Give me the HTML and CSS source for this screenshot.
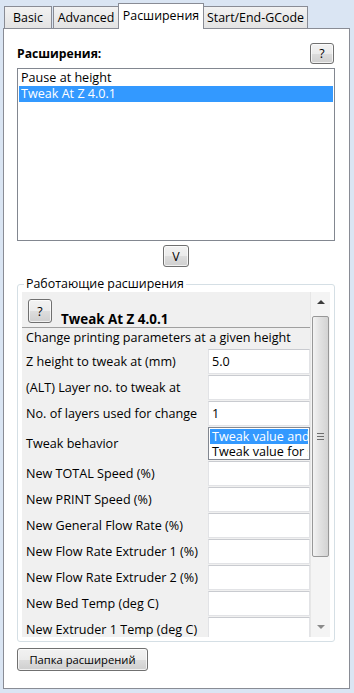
FILE: index.html
```html
<!DOCTYPE html>
<html lang="ru">
<head>
    <meta charset="UTF-8">
    <meta name="viewport" content="width=device-width, initial-scale=1.0">
    <title>Расширения</title>
    <link rel="stylesheet" href="styles.css">
</head>
<body>

<div class="tabs">
    <div class="tab tab-basic">Basic</div>
    <div class="tab tab-advanced">Advanced</div>
    <div class="tab tab-plugins active">Расширения</div>
    <div class="tab tab-gcode">Start/End-GCode</div>
</div>

<div class="pane">
    <div class="pane-head">
        <span class="pane-title">Расширения:</span>
        <button class="btn btn-help">?</button>
    </div>

    <ul class="plugin-list">
        <li>Pause at height</li>
        <li class="selected">Tweak At Z 4.0.1</li>
    </ul>

    <div class="move-row">
        <button class="btn btn-move">V</button>
    </div>

    <fieldset class="active-group">
        <legend>Работающие расширения</legend>
        <div class="scroll-box">
            <div class="scroll-content">
                <div class="plugin-head">
                    <button class="btn btn-help btn-plugin-help">?</button>
                    <span class="plugin-name">Tweak At Z 4.0.1</span>
                </div>
                <div class="plugin-desc">Change printing parameters at a given height</div>

                <div class="param">
                    <label>Z height to tweak at (mm)</label>
                    <input type="text" value="5.0">
                </div>
                <div class="param">
                    <label>(ALT) Layer no. to tweak at</label>
                    <input type="text">
                </div>
                <div class="param">
                    <label>No. of layers used for change</label>
                    <input type="text" value="1">
                </div>
                <div class="param param-list">
                    <label>Tweak behavior</label>
                    <ul class="choice-list">
                        <li class="selected">Tweak value and keep it for the rest</li>
                        <li>Tweak value for single layer only</li>
                    </ul>
                </div>
                <div class="param">
                    <label>New TOTAL Speed (%)</label>
                    <input type="text">
                </div>
                <div class="param">
                    <label>New PRINT Speed (%)</label>
                    <input type="text">
                </div>
                <div class="param">
                    <label>New General Flow Rate (%)</label>
                    <input type="text">
                </div>
                <div class="param">
                    <label>New Flow Rate Extruder 1 (%)</label>
                    <input type="text">
                </div>
                <div class="param">
                    <label>New Flow Rate Extruder 2 (%)</label>
                    <input type="text">
                </div>
                <div class="param">
                    <label>New Bed Temp (deg C)</label>
                    <input type="text">
                </div>
                <div class="param">
                    <label>New Extruder 1 Temp (deg C)</label>
                    <input type="text">
                </div>
                <div class="param">
                    <label>New Extruder 2 Temp (deg C)</label>
                    <input type="text">
                </div>
            </div>

            <div class="scrollbar">
                <div class="arrow arrow-up"></div>
                <div class="track">
                    <div class="thumb"><span class="grip"></span></div>
                </div>
                <div class="arrow arrow-down"></div>
            </div>
        </div>
    </fieldset>

    <button class="btn btn-folder">Папка расширений</button>
</div>

</body>
</html>
```

FILE: styles.css
```css
body {
    margin: 0;
    padding: 0;
    width: 354px;
    height: 693px;
    overflow: hidden;
    background-color: #dae5f3;
    font-family: "Open Sans", "Noto Sans", sans-serif;
    font-size: 12.6px;
    color: #000;
}

/* tabs */
.tabs {
    display: flex;
    align-items: flex-end;
    padding: 3px 0 0 4px;
    box-sizing: border-box;
    height: 28px;
}

.tab {
    height: 22px;
    line-height: 21px;
    text-align: center;
    box-sizing: border-box;
    border: 1px solid #898c95;
    border-bottom: none;
    background: linear-gradient(#f2f2f2, #e3e3e3);
    margin-right: 1px;
    font-size: 12.4px;
    white-space: nowrap;
}

.tab-basic { width: 48px; }
.tab-advanced { width: 66px; margin-right: 0; }
.tab-plugins { width: 86px; margin-right: 0; }
.tab-gcode { width: 104px; border-left: none; }

.tab.active {
    position: relative;
    z-index: 1;
    height: 26px;
    line-height: 24px;
    margin-bottom: -1px;
    background: #fff;
    margin-left: -1px;
}

/* main pane */
.pane {
    margin-left: 3px;
    width: 347px;
    height: 661px;
    box-sizing: border-box;
    border: 1px solid #898c95;
    background-color: #fff;
    padding: 0 14px 0 13px;
}

.pane-head {
    display: flex;
    align-items: center;
    justify-content: space-between;
    margin-top: 14px;
    height: 21px;
}

.pane-title {
    font-weight: bold;
    font-size: 12.2px;
}

.btn {
    font-family: inherit;
    font-size: 12.4px;
    color: #000;
    padding: 0;
    border: 1px solid #707070;
    border-radius: 3px;
    background: linear-gradient(#f2f2f2 0%, #ebebeb 50%, #dddddd 51%, #cfcfcf 100%);
    box-shadow: inset 0 0 0 1px rgba(255, 255, 255, 0.7);
    cursor: pointer;
}

.btn-help {
    width: 24px;
    height: 21px;
    margin-right: 1px;
}

.plugin-list {
    list-style-type: none;
    margin: 4px 0 0 0;
    padding: 1px;
    height: 173px;
    box-sizing: border-box;
    border: 1px solid #828790;
}

.plugin-list li {
    height: 16px;
    line-height: 16px;
    padding-left: 2px;
    white-space: nowrap;
}

.selected {
    background-color: #3399ff;
    color: #fff;
}

.move-row {
    display: flex;
    justify-content: center;
    margin-top: 4px;
}

.btn-move {
    width: 26px;
    height: 22px;
}

/* group of running plugins */
.active-group {
    margin: 9px 0 0 0;
    padding: 0 4px 4px 4px;
    border: 1px solid #d5dfe5;
    border-radius: 3px;
    min-width: 0;
}

.active-group legend {
    margin-left: 2px;
    padding: 0 2px;
    line-height: 16px;
    font-size: 12.4px;
}

.scroll-box {
    display: flex;
    height: 345px;
    background-color: #f0f0f0;
}

.scroll-content {
    width: 289px;
    overflow: hidden;
}

.plugin-head {
    display: flex;
    height: 35px;
    border-bottom: 1px solid #a0a0a0;
}

.btn-plugin-help {
    width: 24px;
    height: 24px;
    margin: 7px 0 0 6px;
}

.plugin-name {
    align-self: flex-end;
    margin-left: 9px;
    font-weight: bold;
    font-size: 13.4px;
    line-height: 16px;
}

.plugin-desc {
    height: 20px;
    line-height: 20px;
    padding-left: 4px;
    white-space: nowrap;
}

.param {
    display: flex;
    align-items: center;
    height: 26px;
    padding-left: 4px;
}

.param label {
    width: 182px;
    flex-shrink: 0;
    white-space: nowrap;
}

.param input {
    width: 102px;
    height: 25px;
    margin: 0;
    box-sizing: border-box;
    border: 1px solid #e2e3e6;
    border-top-color: #c9cbd0;
    padding: 0 0 0 3px;
    font-family: inherit;
    font-size: 12.6px;
    background-color: #fff;
    outline: none;
}

.param-list {
    height: 34px;
}

.choice-list {
    list-style-type: none;
    margin: 0;
    padding: 1px;
    width: 102px;
    height: 33px;
    box-sizing: border-box;
    border: 1px solid #828790;
    background-color: #fff;
    overflow: hidden;
}

.choice-list li {
    height: 15px;
    line-height: 15px;
    padding-left: 2px;
    white-space: nowrap;
    overflow: hidden;
}

/* scrollbar */
.scrollbar {
    display: flex;
    flex-direction: column;
    width: 19px;
    border-left: 1px solid #e6e6e6;
    background-color: #f4f4f4;
}

.arrow {
    height: 20px;
    display: flex;
    align-items: center;
    justify-content: center;
}

.arrow-up::before {
    content: "";
    border-left: 4px solid transparent;
    border-right: 4px solid transparent;
    border-bottom: 4px solid #3c3c3c;
}

.arrow-down::before {
    content: "";
    border-left: 4px solid transparent;
    border-right: 4px solid transparent;
    border-top: 4px solid #8a8a8a;
}

.track {
    flex: 1;
    padding-top: 4px;
}

.thumb {
    height: 241px;
    margin: 0 1px;
    box-sizing: border-box;
    border: 1px solid #979797;
    border-radius: 2px;
    background: linear-gradient(to right, #f3f3f3, #e2e2e2 45%, #d3d3d3);
    display: flex;
    align-items: center;
    justify-content: center;
}

.grip {
    width: 7px;
    height: 5px;
    border-top: 1px solid #6d6d6d;
    border-bottom: 1px solid #6d6d6d;
    background: linear-gradient(transparent 2px, #6d6d6d 2px, #6d6d6d 3px, transparent 3px);
}

.btn-folder {
    display: block;
    margin-top: 6px;
    width: 131px;
    height: 23px;
    font-size: 11.2px;
    white-space: nowrap;
}
```
